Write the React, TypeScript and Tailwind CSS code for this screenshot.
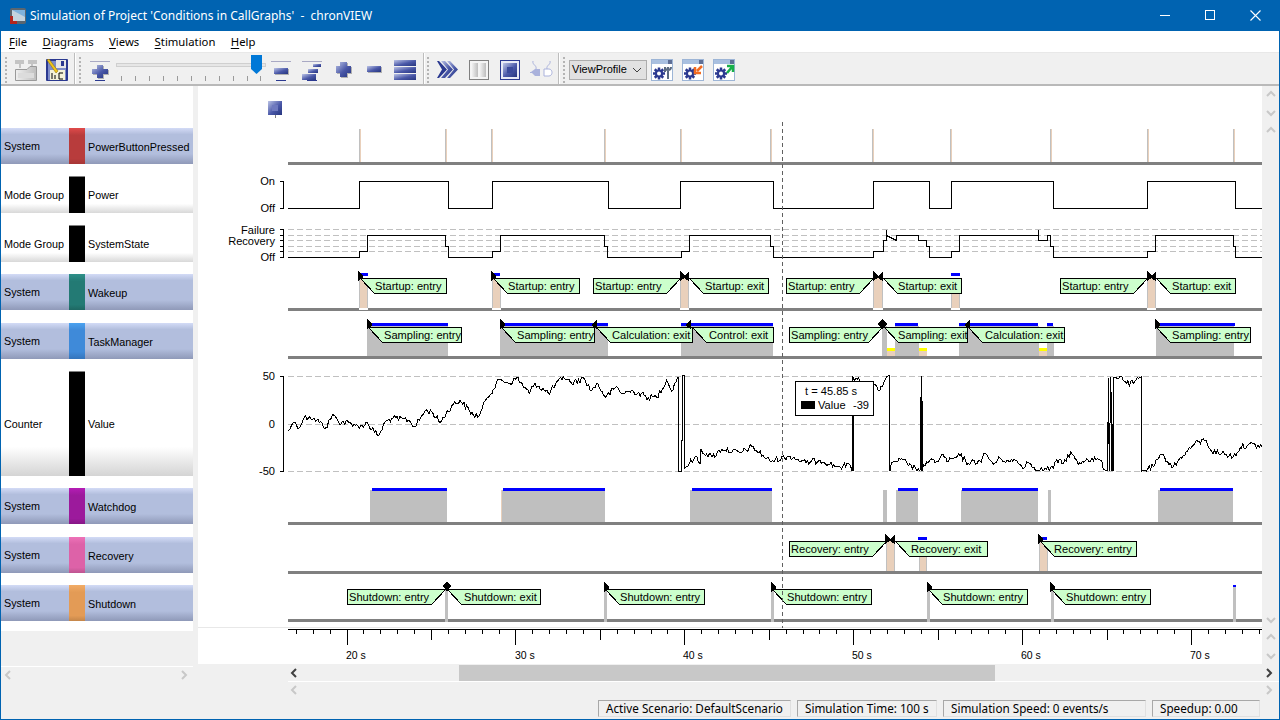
import React from "react";

const NAVY = "url(#navy)";
const FS = 11.1;

function Grip() {
  return (
    <svg width="3" height="26" className="shrink-0">
      {[0, 4, 8, 12, 16, 20, 24].map((y) => (
        <rect key={y} x="0" y={y} width="2" height="2" fill="#b4b4b4" />
      ))}
    </svg>
  );
}
function Sep({ cls }: { cls: string }) {
  return <div className={"w-[2px] h-[31px] -mt-[2px] bg-[#bdbdbd] border-r border-white shrink-0 " + cls} />;
}
function Chevron({ dir, color }: { dir: "l" | "r" | "u" | "d"; color: string }) {
  const p = { l: "6,1 2,5 6,9", r: "2,1 6,5 2,9", u: "1,6 5,2 9,6", d: "1,3 5,7 9,3" }[dir];
  return (
    <svg width="10" height="10" className="shrink-0">
      <polyline points={p} fill="none" stroke={color} strokeWidth="2" />
    </svg>
  );
}
function Gear({ x, y }: { x: number; y: number }) {
  const teeth = [0, 45, 90, 135];
  return (
    <g>
      {teeth.map((a) => (
        <rect key={a} x={x - 1.25} y={y - 6} width="2.5" height="12" fill="#2b3990" transform={`rotate(${a} ${x} ${y})`} />
      ))}
      <circle cx={x} cy={y} r="4" fill="#2b3990" />
      <circle cx={x} cy={y} r="2" fill="#fff" />
    </g>
  );
}
function WinIcon({ children, cls }: { children: React.ReactNode; cls: string }) {
  return (
    <svg width="22" height="22" className={"shrink-0 " + cls}>
      <rect x="0.5" y="0.5" width="21" height="21" fill="#fff" stroke="#9db5d6" />
      <rect x="1" y="1" width="20" height="4" fill="#a9c0e0" />
      <rect x="17" y="1" width="4" height="4" fill="#5f6f96" />
      <Gear x={8} y={14.500} />
      {children}
    </svg>
  );
}

// ---------- waveform -------------
const k8: number[][] = [[25,198],[35,180],[45,172],[58,188],[72,158],[90,155],[110,165],[138,188],[158,148],[175,170],[230,178],[238,190],[258,172],[296,213],[315,172],[335,160],[385,165],[405,185],[435,138],[455,140],[480,172],[515,122],[540,106],[580,150],[598,152],[620,100],[660,42],[690,55],[710,38],[748,85],[765,55],[805,85],[850,35],[875,55],[912,40],[935,78],[950,55],[978,97],[1010,65],[1025,85],[1060,78],[1105,97],[1130,97],[1160,45],[1175,78],[1192,38],[1195,38],[1195,318],[1205,318],[1208,32],[1213,32],[1214,310],[1220,305],[1245,275],[1260,295]];
const k9: number[][] = [[0,305],[30,300],[36,318],[37,32],[38,318],[39,35],[60,50],[100,60],[115,78],[135,45],[147,32],[149,32],[150,318],[150,312],[160,290],[190,285],[205,302],[235,312],[240,318],[244,32],[246,315],[260,290],[290,290],[305,268],[325,290],[360,272],[385,295],[420,288],[437,266],[460,298],[480,280],[510,290],[530,285],[548,310],[560,290],[595,315],[640,310],[650,285],[670,295],[692,262],[715,298],[740,282],[780,285],[795,315],[803,318],[805,38],[808,318],[812,36],[818,318],[822,36],[845,35],[860,55],[880,55],[904,35],[905,318],[915,315],[940,305],[965,270],[1000,305],[1030,270],[1065,235],[1098,225],[1115,260],[1145,265],[1180,275],[1200,248],[1225,238],[1266,245]];
const pts: number[][] = [
  ...k8.map(([a, b]) => [280 + a / 3, 365 + b / 3]),
  [700, 450],[712, 457],[722, 449],[740, 453],[752, 447],[770, 461],[790, 456],[806, 463],[820, 460],[838, 467],
  ...k9.map(([a, b]) => [840 + a / 3, 365 + b / 3]),
];
let seed = 12345;
const rnd = () => {
  seed = (seed * 1103515245 + 12345) & 0x7fffffff;
  return seed / 0x7fffffff - 0.5;
};
function wavePath() {
  let d = `M${pts[0][0].toFixed(1)} ${pts[0][1].toFixed(1)}`;
  for (let i = 1; i < pts.length; i++) {
    const [x0, y0] = pts[i - 1];
    const [x1, y1] = pts[i];
    const dx = x1 - x0;
    if (dx >= 3 && Math.abs(y1 - y0) < 70) {
      const n = Math.floor(dx / 1.3);
      for (let j = 1; j < n; j++) {
        const x = x0 + (dx * j) / n;
        const y = Math.max(376, Math.min(471, y0 + ((y1 - y0) * j) / n + rnd() * 6));
        d += `L${x.toFixed(1)} ${y.toFixed(1)}`;
      }
    }
    d += `L${x1.toFixed(1)} ${y1.toFixed(1)}`;
  }
  return d;
}
const WAVE = wavePath();

// ---------- chart helpers -------------
function Base({ y }: { y: number }) {
  return <rect x="288" y={y} width="974" height="3" fill="#808080" />;
}
function Dash({ y, d = "6 3" }: { y: number; d?: string }) {
  return <line x1="288" x2="1262" y1={y + 0.5} y2={y + 0.5} stroke="#c0c0c0" strokeDasharray={d} />;
}
function RC({ tip, right, y, t, tx }: { tip: number; right: number; y: number; t: string; tx: number }) {
  return (
    <g>
      <polygon points={`${tip + 0.5},${y + 0.5} ${right + 0.5},${y + 0.5} ${right + 0.5},${y + 15.5} ${tip + 14.5},${y + 15.5}`} fill="#ccffcc" stroke="#000" />
      <text x={tx} y={y + 12} fontSize={FS} fill="#000">{t}</text>
    </g>
  );
}
function LC({ left, tip, y, t }: { left: number; tip: number; y: number; t: string }) {
  return (
    <g>
      <polygon points={`${left + 0.5},${y + 0.5} ${tip + 0.5},${y + 0.5} ${tip - 13.5},${y + 15.5} ${left + 0.5},${y + 15.5}`} fill="#ccffcc" stroke="#000" />
      <text x={left + 2} y={y + 12} fontSize={FS} fill="#000">{t}</text>
    </g>
  );
}
function FR({ x, y }: { x: number; y: number }) {
  return <polygon points={`${x},${y - 7} ${x + 5},${y - 2} ${x + 5},${y} ${x},${y + 3}`} fill="#000" />;
}
function FL({ x, y }: { x: number; y: number }) {
  return <polygon points={`${x},${y - 7} ${x - 5},${y - 2} ${x - 5},${y} ${x},${y + 3}`} fill="#000" />;
}
function Tan({ x, w, y0, y1 }: { x: number; w: number; y0: number; y1: number }) {
  return (
    <g>
      <rect x={x} y={y0} width={w} height={y1 - y0} fill="#e9d0bb" />
      <rect x={x} y={y0} width="1" height={y1 - y0} fill="#c0c0c0" />
      <rect x={x + w - 1} y={y0} width="1" height={y1 - y0} fill="#c0c0c0" />
    </g>
  );
}
function Blue({ x, x2, y }: { x: number; x2: number; y: number }) {
  return <rect x={x} y={y} width={x2 - x} height="3" fill="#0000ff" />;
}
function Gray({ x, x2, y0, y1 }: { x: number; x2: number; y0: number; y1: number }) {
  return <rect x={x} y={y0} width={x2 - x} height={y1 - y0} fill="#bfbfbf" />;
}

const Chart = () => {
  const ticks: React.ReactNode[] = [];
  for (let i = 0; i < 59; i++) {
    const v = 16 + i;
    const x = Math.round(346.5 + (v - 20) * 16.89);
    if (x < 288 || x > 1262) continue;
    const len = v % 10 === 0 ? 15 : v % 5 === 0 ? 10 : 4;
    ticks.push(<line key={v} x1={x + 0.5} x2={x + 0.5} y1="630" y2={630 + len} stroke="#000" />);
  }
  return (
    <svg width="1064" height="578" viewBox="198 86 1064 578" className="block shrink-0 bg-white" shapeRendering="crispEdges" fontFamily="'Liberation Sans',sans-serif">
      {/* mark */}
      <rect x="268" y="101" width="14" height="14" fill={NAVY} />
      <rect x="272" y="105" width="6" height="6" fill="#6f7abf" />
      <rect x="275" y="115" width="1" height="3" fill="#808080" />

      {/* PowerButtonPressed */}
      {[359, 445, 491, 604, 680, 770, 872, 950, 1050, 1147, 1233].map((x) => (
        <g key={x}>
          <rect x={x} y="129" width="1" height="33" fill="#c0c0c0" />
          <rect x={x + 1} y="129" width="1" height="33" fill="#e9d0bb" />
        </g>
      ))}
      <Base y={162} />

      {/* Power */}
      <polyline fill="none" stroke="#000" points="288,208.5 359.5,208.5 359.5,181.5 448.5,181.5 448.5,208.5 492.5,208.5 492.5,181.5 608.5,181.5 608.5,208.5 680.5,208.5 680.5,181.5 773.5,181.5 773.5,208.5 873.5,208.5 873.5,181.5 929.5,181.5 929.5,208.5 951.5,208.5 951.5,181.5 1053.5,181.5 1053.5,208.5 1147.5,208.5 1147.5,181.5 1235.5,181.5 1235.5,208.5 1262,208.5" />
      <polyline fill="none" stroke="#000" points="280,181.5 283.5,181.5 283.5,208.5 280,208.5" />
      <text x="275" y="185" textAnchor="end" fontSize={FS} fill="#000">On</text>
      <text x="275" y="212" textAnchor="end" fontSize={FS} fill="#000">Off</text>

      {/* SystemState */}
      {[229, 235, 240, 246, 251].map((y) => <Dash key={y} y={y} />)}
      <polyline fill="none" stroke="#000" points="288,257.5 359.5,257.5 359.5,251.5 367.5,251.5 367.5,235.5 445.5,235.5 445.5,246.5 448.5,246.5 448.5,257.5 492.5,257.5 492.5,251.5 500.5,251.5 500.5,235.5 604.5,235.5 604.5,246.5 607.5,246.5 607.5,257.5 681.5,257.5 681.5,251.5 689.5,251.5 689.5,235.5 770.5,235.5 770.5,246.5 773.5,246.5 773.5,257.5 873.5,257.5 873.5,251.5 883.5,251.5 883.5,240.5 886.5,240.5 886.5,229.5 886.5,235.5 896.5,240.5 896.5,235.5 918.5,235.5 918.5,240.5 926.5,240.5 926.5,246.5 929.5,246.5 929.5,257.5 951.5,257.5 951.5,251.5 959.5,251.5 959.5,235.5 1038.5,235.5 1038.5,229.5 1038.5,240.5 1047.5,240.5 1047.5,235.5 1050.5,235.5 1050.5,246.5 1053.5,246.5 1053.5,257.5 1147.5,257.5 1147.5,251.5 1155.5,251.5 1155.5,235.5 1233.5,235.5 1233.5,246.5 1235.5,246.5 1235.5,257.5 1262,257.5" />
      <polyline fill="none" stroke="#000" points="280,229.5 283.5,229.5 283.5,257.5 280,257.5" />
      {[235, 240, 246, 251].map((y) => <line key={y} x1="280" x2="283" y1={y + 0.5} y2={y + 0.5} stroke="#000" />)}
      <text x="275" y="234" textAnchor="end" fontSize={FS} fill="#000">Failure</text>
      <text x="275" y="245" textAnchor="end" fontSize={FS} fill="#000">Recovery</text>
      <text x="275" y="261" textAnchor="end" fontSize={FS} fill="#000">Off</text>

      {/* Wakeup */}
      <Base y={308} />
      {[[359, 9], [492, 9], [680, 9], [873, 10], [951, 9], [1147, 9]].map(([x, w]) => (
        <g key={x}>
          <rect x={x} y="308" width={w} height="2" fill="#fff" />
          <Tan x={x} w={w} y0={278} y1={308} />
        </g>
      ))}
      <Blue x={360} x2={368} y={273} />
      <Blue x={493} x2={500} y={273} />
      <Blue x={951} x2={960} y={273} />
      <RC tip={360} right={446} y={278} t="Startup: entry" tx={375} />
      <RC tip={493} right={579} y={278} t="Startup: entry" tx={508} />
      <LC left={593} tip={680} y={278} t="Startup: entry" />
      <RC tip={689} right={768} y={278} t="Startup: exit" tx={705} />
      <LC left={786} tip={873} y={278} t="Startup: entry" />
      <RC tip={883} right={961} y={278} t="Startup: exit" tx={898} />
      <LC left={1060} tip={1147} y={278} t="Startup: entry" />
      <RC tip={1156} right={1235} y={278} t="Startup: exit" tx={1172} />
      <FR x={358} y={278} /><FR x={491} y={278} />
      <FL x={689} y={278} /><FR x={680} y={278} />
      <FL x={883} y={278} /><FR x={873} y={278} />
      <FL x={1156} y={278} /><FR x={1147} y={278} />

      {/* TaskManager */}
      <Base y={356} />
      <Gray x={367} x2={448} y0={326} y1={356} />
      <Gray x={500} x2={608} y0={326} y1={356} />
      <Gray x={681} x2={773} y0={326} y1={356} />
      <Gray x={882} x2={887} y0={326} y1={356} />
      <Gray x={895} x2={919} y0={326} y1={356} />
      <Gray x={959} x2={1039} y0={326} y1={356} />
      <Gray x={1047} x2={1054} y0={326} y1={356} />
      <Gray x={1156} x2={1234} y0={326} y1={356} />
      {[887, 919, 1039].map((x) => (
        <g key={x}>
          <rect x={x} y="348" width="8" height="3" fill="#ffff00" />
          <rect x={x} y="351" width="8" height="5" fill="#e9d0bb" />
        </g>
      ))}
      <Blue x={368} x2={448} y={323} />
      <Blue x={501} x2={608} y={323} />
      <Blue x={681} x2={773} y={323} />
      <Blue x={895} x2={918} y={323} />
      <Blue x={959} x2={1038} y={323} />
      <Blue x={1047} x2={1053} y={323} />
      <Blue x={1156} x2={1235} y={323} />
      <RC tip={368} right={461} y={327} t="Sampling: entry" tx={384} />
      <RC tip={501} right={594} y={327} t="Sampling: entry" tx={517} />
      <RC tip={596} right={692} y={327} t="Calculation: exit" tx={612} />
      <RC tip={692} right={773} y={327} t="Control: exit" tx={709} />
      <LC left={789} tip={882} y={327} t="Sampling: entry" />
      <RC tip={884} right={967} y={327} t="Sampling: exit" tx={898} />
      <RC tip={968} right={1064} y={327} t="Calculation: exit" tx={985} />
      <RC tip={1156} right={1250} y={327} t="Sampling: entry" tx={1172} />
      <FR x={367} y={326} /><FR x={500} y={326} /><FL x={597} y={326} />
      <FL x={691} y={326} /><FR x={1155} y={326} /><FL x={970} y={326} />
      <polygon points="882,319 887,324 882,329 877,324" fill="#000" />

      {/* Value */}
      <Dash y={376} /><Dash y={424} /><Dash y={471} />
      <polyline fill="none" stroke="#000" points="280,376.5 283.5,376.5 283.5,471.5 280,471.5" />
      <text x="275" y="380" textAnchor="end" fontSize={FS} fill="#000">50</text>
      <text x="275" y="428" textAnchor="end" fontSize={FS} fill="#000">0</text>
      <text x="275" y="475" textAnchor="end" fontSize={FS} fill="#000">-50</text>
      <path d={WAVE} fill="none" stroke="#000" />
      <rect x="852" y="415" width="2" height="56" fill="#000" />
      <rect x="921" y="401" width="2" height="70" fill="#000" />
      <rect x="1111" y="424" width="3" height="47" fill="#000" />

      {/* Watchdog */}
      <Base y={522} />
      <Gray x={370} x2={447} y0={490} y1={522} />
      <rect x="501" y="490" width="1" height="32" fill="#e9d0bb" />
      <Gray x={502} x2={605} y0={490} y1={522} />
      <Gray x={690} x2={772} y0={490} y1={522} />
      <Gray x={883} x2={887} y0={490} y1={522} />
      <Gray x={896} x2={918} y0={490} y1={522} />
      <Gray x={961} x2={1038} y0={490} y1={522} />
      <Gray x={1048} x2={1051} y0={490} y1={522} />
      <Gray x={1158} x2={1233} y0={490} y1={522} />
      <Blue x={372} x2={447} y={488} />
      <Blue x={503} x2={605} y={488} />
      <Blue x={692} x2={772} y={488} />
      <Blue x={898} x2={918} y={488} />
      <Blue x={962} x2={1038} y={488} />
      <Blue x={1160} x2={1233} y={488} />

      {/* Recovery */}
      <Base y={571} />
      <Tan x={886} w={9} y0={541} y1={571} />
      <Tan x={919} w={8} y0={541} y1={571} />
      <Tan x={1039} w={9} y0={541} y1={571} />
      <Blue x={918} x2={927} y={537} />
      <Blue x={1040} x2={1047} y={537} />
      <LC left={789} tip={886} y={541} t="Recovery: entry" />
      <RC tip={895} right={987} y={541} t="Recovery: exit" tx={911} />
      <RC tip={1040} right={1136} y={541} t="Recovery: entry" tx={1054} />
      <FR x={885} y={541} /><FL x={895} y={541} /><FR x={1038} y={541} />

      {/* Shutdown */}
      <Base y={619} />
      {[445, 604, 771, 927, 1051, 1233].map((x) => (
        <rect key={x} x={x} y="586" width="3" height="36" fill="#c0c0c0" />
      ))}
      <LC left={347} tip={445} y={589} t="Shutdown: entry" />
      <RC tip={447} right={540} y={589} t="Shutdown: exit" tx={464} />
      <RC tip={605} right={704} y={589} t="Shutdown: entry" tx={620} />
      <RC tip={772} right={871} y={589} t="Shutdown: entry" tx={787} />
      <RC tip={928} right={1027} y={589} t="Shutdown: entry" tx={943} />
      <RC tip={1051} right={1150} y={589} t="Shutdown: entry" tx={1066} />
      <polygon points="447,581 451,586 447,592 443,586" fill="#000" />
      <FR x={604} y={589} /><FR x={771} y={589} /><FR x={927} y={589} /><FR x={1050} y={589} />
      <rect x="1233" y="585" width="3" height="2" fill="#0000ff" />

      {/* axis */}
      <rect x="198" y="627" width="1064" height="1" fill="#e8e8e8" />
      <line x1="288" x2="1262" y1="629.5" y2="629.5" stroke="#000" />
      {ticks}
      {[[20, 346], [30, 515], [40, 683], [50, 852], [60, 1021], [70, 1190]].map(([v, x]) => (
        <text key={v} x={x} y="659" fontSize="10.500" fill="#000">{v} s</text>
      ))}

      {/* cursor */}
      <line x1="782.5" x2="782.5" y1="122" y2="628" stroke="#606060" strokeDasharray="4 3" />

      {/* tooltip */}
      <rect x="795.5" y="381.5" width="78" height="34" fill="#fff" stroke="#000" />
      <text x="805" y="395" fontSize={FS} fill="#000">t = 45.85 s</text>
      <rect x="801" y="401" width="14" height="8" fill="#000" />
      <text x="818" y="409" fontSize={FS} fill="#000">Value</text>
      <text x="853" y="409" fontSize={FS} fill="#000">-39</text>
    </svg>
  );
};

// ---------- left list -------------
const SYS = "bg-[linear-gradient(#d3dbf6_0%,#b2bedd_18%,#b2bedd_72%,#8f99b8_100%)]";
const MODE = "bg-[linear-gradient(#ffffff_0%,#ffffff_75%,#d8d8d8_100%)]";
const rows = [
  { a: "System", b: "PowerButtonPressed", bg: SYS, c: "bg-[linear-gradient(#e04a4a_0%,#b83c3c_20%,#b83c3c_85%,#a63636_100%)]", h: "h-[36px]", m: "" },
  { a: "Mode Group", b: "Power", bg: MODE, c: "bg-black border-t border-[#808080]", h: "h-[37px]", m: "mt-[12px]" },
  { a: "Mode Group", b: "SystemState", bg: MODE, c: "bg-black border-t border-[#808080]", h: "h-[37px]", m: "mt-[12px]" },
  { a: "System", b: "Wakeup", bg: SYS, c: "bg-[linear-gradient(#2e918a_0%,#237a74_20%,#237a74_85%,#1e6762_100%)]", h: "h-[36px]", m: "mt-[12px]" },
  { a: "System", b: "TaskManager", bg: SYS, c: "bg-[linear-gradient(#4ba3f0_0%,#3f8ad9_20%,#3f8ad9_80%,#3474bb_100%)]", h: "h-[36px]", m: "mt-[13px]" },
  { a: "Counter", b: "Value", bg: "bg-[linear-gradient(#ffffff_0%,#ffffff_72%,#d4d4d4_100%)]", c: "bg-black border-t border-[#808080]", h: "h-[105px]", m: "mt-[12px]" },
  { a: "System", b: "Watchdog", bg: SYS, c: "bg-[linear-gradient(#b51cb5_0%,#9c1a9c_20%,#9c1a9c_85%,#851685_100%)]", h: "h-[36px]", m: "mt-[12px]" },
  { a: "System", b: "Recovery", bg: SYS, c: "bg-[linear-gradient(#ee72b8_0%,#dd62a8_20%,#dd62a8_85%,#bd5590_100%)]", h: "h-[36px]", m: "mt-[13px]" },
  { a: "System", b: "Shutdown", bg: SYS, c: "bg-[linear-gradient(#f2ac66_0%,#e39b56_20%,#e39b56_85%,#c4864a_100%)]", h: "h-[36px]", m: "mt-[12px]" },
];

function Menu({ u, r }: { u: string; r: string }) {
  return (
    <span className="shrink-0">
      <span className="underline underline-offset-2">{u}</span>
      {r}
    </span>
  );
}

const STATUS = "h-[17px] border border-[#a8a8a8] border-r-[#e0e0e0] border-b-[#e0e0e0] pl-[7px] pt-[1px] flex items-center whitespace-nowrap";

export default function App() {
  return (
    <div className="w-[1280px] h-[720px] flex flex-col bg-[#f0f0f0] overflow-hidden border-x border-b border-[#0063b1] text-[10.8px] text-black font-['Liberation_Sans',sans-serif] leading-none">
      <svg className="absolute w-0 h-0">
        <defs>
          <linearGradient id="navy" x1="0" y1="0" x2="1" y2="1">
            <stop offset="0" stopColor="#bcc4e6" />
            <stop offset="0.55" stopColor="#4a58a8" />
            <stop offset="1" stopColor="#26357f" />
          </linearGradient>
          <linearGradient id="grey" x1="0" y1="0" x2="1" y2="0">
            <stop offset="0" stopColor="#f0f0f0" />
            <stop offset="1" stopColor="#bdbdbd" />
          </linearGradient>
        </defs>
      </svg>

      {/* title bar */}
      <div className="h-[31px] bg-[#0063b1] text-white flex items-center shrink-0 text-[12px] font-['Noto_Sans',sans-serif]">
        <svg width="16" height="16" className="ml-[9px] shrink-0">
          <rect x="0" y="0" width="16" height="16" rx="2" fill="#5a6670" />
          <rect x="2" y="2" width="13" height="11" fill="#7fb2dc" />
          <polygon points="2,2 15,9 15,13 2,13" fill="#c4d3de" />
          <rect x="0" y="8" width="3" height="8" fill="#b3261e" />
          <rect x="0" y="13" width="7" height="3" fill="#b3261e" />
        </svg>
        <span className="ml-[4px] whitespace-pre">Simulation of Project 'Conditions in CallGraphs'  -  chronVIEW</span>
        <div className="ml-auto flex items-center">
          <svg width="11" height="11" className="mr-[34px]"><rect x="0" y="5" width="10" height="1" fill="#fff" /></svg>
          <svg width="11" height="11" className="mr-[34px]"><rect x="0.5" y="0.5" width="9" height="9" fill="none" stroke="#fff" /></svg>
          <svg width="11" height="11" className="mr-[18px]"><path d="M0.5 0.5L10.5 10.5M10.5 0.5L0.5 10.5" stroke="#fff" strokeWidth="1.1" /></svg>
        </div>
      </div>

      {/* menu */}
      <div className="h-[21px] bg-white flex items-center gap-[15.4px] pl-[8px] pt-[1px] shrink-0 text-[11.3px] font-['Noto_Sans',sans-serif]">
        <Menu u="F" r="ile" />
        <Menu u="D" r="iagrams" />
        <Menu u="V" r="iews" />
        <Menu u="S" r="timulation" />
        <Menu u="H" r="elp" />
      </div>

      {/* toolbar */}
      <div className="h-[34px] flex items-center pt-[2px] bg-[#f0f0f0] border-t border-b-2 border-t-[#e8e8e8] border-b-[#b9b9b9] shrink-0">
        <div className="ml-[4px]"><Grip /></div>
        <svg width="22" height="22" className="ml-[7px] shrink-0">
          <rect x="0" y="1" width="9" height="4" fill="#c4c4c4" />
          <rect x="13" y="1" width="9" height="4" fill="#c4c4c4" />
          <path d="M5 5V9M17 5V7" stroke="#9a9a9a" fill="none" />
          <path d="M0.5 10.5H12L15 7.5H21.5V21.5H0.5Z" fill="url(#grey)" stroke="#9a9a9a" />
          <rect x="3" y="14" width="16" height="5" fill="#dcdcdc" />
        </svg>
        <svg width="22" height="22" className="ml-[9px] shrink-0">
          <rect x="0" y="0" width="22" height="22" rx="1" fill="#2b3990" />
          <rect x="2" y="2" width="18" height="19" fill="#7f8dc8" />
          <rect x="10" y="1" width="10" height="8" fill="#e6e6e6" />
          <rect x="15" y="2" width="3" height="5" fill="#2b3990" />
          <rect x="4" y="11" width="15" height="10" fill="#f5f2d8" />
          <path d="M1 1L3 0L12 12L10 14Z" fill="#f0c419" stroke="#8a6d00" strokeWidth="0.5" />
          <path d="M6 20V14M9 20V16M13 20V14H17M13 20H17" stroke="#000" fill="none" strokeWidth="1" />
        </svg>
        <Sep cls="ml-[6px]" />
        <div className="ml-[3px]"><Grip /></div>
        <svg width="20" height="22" className="ml-[8px] shrink-0">
          <rect x="0" y="2" width="20" height="1" fill="#a9a9c4" />
          <path d="M7 6H13V10H18V15H13V19H7V15H2V10H7Z" transform="translate(1 1)" fill="#b0b0b0" />
          <path d="M7 6H13V10H18V15H13V19H7V15H2V10H7Z" fill={NAVY} />
          <rect x="5" y="21" width="10" height="1" fill="#2b3990" />
        </svg>
        <svg width="150" height="30" className="ml-[6px] shrink-0">
          <rect x="0.5" y="8.5" width="149" height="3" fill="#e6e6e6" stroke="#cfcfcf" />
          {[5, 19, 33, 47, 61, 75, 89, 103, 117, 131, 144].map((x) => (
            <rect key={x} x={x} y="21" width="1" height="5" fill="#9a9a9a" />
          ))}
          <path d="M135 0H146V14L140.500 19L135 14Z" fill="#0078d7" />
        </svg>
        <svg width="20" height="22" className="ml-[5px] shrink-0">
          <rect x="0" y="2" width="20" height="1" fill="#a9a9c4" />
          <rect x="4" y="10" width="14" height="6" fill="#b0b0b0" />
          <rect x="3" y="9" width="14" height="6" fill={NAVY} />
          <rect x="5" y="21" width="10" height="1" fill="#2b3990" />
        </svg>
        <svg width="20" height="22" className="ml-[11px] shrink-0">
          <rect x="0" y="2" width="20" height="1" fill="#a9a9c4" />
          <rect x="11" y="5" width="8" height="3" fill={NAVY} />
          <rect x="6" y="10" width="10" height="4" fill={NAVY} />
          <rect x="0" y="15" width="14" height="6" fill={NAVY} />
          <rect x="5" y="21" width="10" height="1" fill="#2b3990" />
        </svg>
        <svg width="16" height="16" className="ml-[14px] shrink-0">
          <path d="M4 0H11V4H15V11H11V15H4V11H0V4H4Z" transform="translate(1 1)" fill="#b0b0b0" />
          <path d="M4 0H11V4H15V11H11V15H4V11H0V4H4Z" fill={NAVY} />
        </svg>
        <svg width="15" height="7" className="ml-[15px] shrink-0">
          <rect x="1" y="1" width="14" height="6" fill="#b0b0b0" />
          <rect x="0" y="0" width="14" height="6" fill={NAVY} />
        </svg>
        <svg width="22" height="20" className="ml-[12px] shrink-0">
          <rect x="0" y="0" width="22" height="6" fill={NAVY} />
          <rect x="0" y="7" width="22" height="6" fill={NAVY} />
          <rect x="0" y="14" width="22" height="6" fill={NAVY} />
        </svg>
        <Sep cls="ml-[7px]" />
        <div className="ml-[2px]"><Grip /></div>
        <svg width="22" height="18" className="ml-[7px] shrink-0">
          <path d="M0 0H2L10 8.500L2 17H0L5 8.500Z" fill="#2b3990" />
          <path d="M4 0H8L16 8.500L8 17H4L11 8.500Z" fill={NAVY} />
          <path d="M10 0H13L21 8.500L13 17H10L17 8.500Z" fill={NAVY} />
        </svg>
        <svg width="20" height="20" className="ml-[10px] shrink-0">
          <rect x="0.5" y="0.5" width="19" height="19" fill="#f4f4f4" stroke="#808080" />
          <rect x="3" y="3" width="6" height="14" fill="url(#grey)" />
          <rect x="11" y="3" width="6" height="14" fill="url(#grey)" />
        </svg>
        <svg width="20" height="20" className="ml-[11px] shrink-0">
          <rect x="0.5" y="0.5" width="19" height="19" fill="#e8eaf6" stroke="#2b3990" />
          <rect x="3" y="3" width="14" height="14" fill={NAVY} />
          <rect x="7" y="7" width="6" height="6" fill="#3b4a9c" />
        </svg>
        <svg width="23" height="20" className="ml-[10px] shrink-0" fill="none">
          <path d="M3 1C2 5 7 5 6 9M20 1C21 5 16 5 17 9" stroke="#aab2dc" />
          <path d="M1 12L5 9H10V16H5Z" fill="#aab2dc" />
          <path d="M14 9H19C21 9 22 11 22 12.500C22 14 21 16 19 16H14Z" fill="#fff" stroke="#aab2dc" />
          <rect x="0" y="12" width="2" height="1" fill="#aab2dc" />
        </svg>
        <Sep cls="ml-[5px]" />
        <div className="ml-[3px]"><Grip /></div>
        <div className="ml-[3px] w-[78px] h-[20px] bg-[#e1e1e1] border border-[#adadad] flex items-center pl-[2px] shrink-0 text-[11px]">
          <span>ViewProfile</span>
          <svg width="10" height="6" className="ml-auto mr-[4px]"><polyline points="1,1 5,5 9,1" fill="none" stroke="#404040" /></svg>
        </div>
        <WinIcon cls="ml-[4px]">
          <path d="M14 8V13M17 8V20M14 8C14 12 20 12 20 8" stroke="#5a6a80" strokeWidth="2" fill="none" />
        </WinIcon>
        <WinIcon cls="ml-[9px]">
          <path d="M20 7L15 12M13 8V14H19" stroke="#f26b21" strokeWidth="2.500" fill="none" />
        </WinIcon>
        <WinIcon cls="ml-[9px]">
          <path d="M14 14L19 8M14 7H20V13" stroke="#19b04a" strokeWidth="2.500" fill="none" />
        </WinIcon>
      </div>

      {/* body */}
      <div className="flex flex-1 min-h-0">
        <div className="w-[192px] shrink-0 flex flex-col">
          <div className="h-[545px] bg-white pt-[42px] shrink-0">
            {rows.map((r, i) => (
              <div key={i} className={"flex items-center " + r.h + " " + r.m + " " + r.bg}>
                <div className="w-[68px] pl-[3px] pt-[1px] shrink-0 whitespace-nowrap">{r.a}</div>
                <div className={"w-[16px] h-full shrink-0 " + r.c} />
                <div className="pl-[3px] pt-[2px] whitespace-nowrap">{r.b}</div>
              </div>
            ))}
          </div>
          <div className="h-[35px] shrink-0" />
          <div className="h-px bg-white shrink-0" />
          <div className="h-[16px] flex items-center justify-between px-[3px] shrink-0">
            <Chevron dir="l" color="#c8c8c8" />
            <Chevron dir="r" color="#c8c8c8" />
          </div>
        </div>
        <div className="w-[5px] shrink-0" />
        <div className="flex-1 min-w-0 flex flex-col">
          <div className="flex shrink-0">
            <Chart />
            <div className="flex-1 flex flex-col items-center pt-[4px] gap-[8px]">
              <Chevron dir="u" color="#c8c8c8" />
              <Chevron dir="d" color="#c8c8c8" />
              <Chevron dir="u" color="#c8c8c8" />
              <div className="mt-auto mb-[3px] flex flex-col gap-[8px] items-center">
                <Chevron dir="d" color="#c8c8c8" />
                <Chevron dir="u" color="#c8c8c8" />
                <Chevron dir="d" color="#c8c8c8" />
              </div>
            </div>
          </div>
          <div className="h-[16px] mt-[1px] ml-[90px] flex items-center bg-[#f0f0f0] shrink-0">
            <div className="w-[171px] pl-[2px] shrink-0"><Chevron dir="l" color="#404040" /></div>
            <div className="w-[536px] h-[16px] bg-[#c8c8c8] shrink-0" />
            <div className="ml-auto mr-[4px]"><Chevron dir="r" color="#404040" /></div>
          </div>
          <div className="h-px ml-[90px] bg-white shrink-0" />
          <div className="h-[16px] ml-[90px] flex items-center justify-between pl-[2px] pr-[4px] shrink-0">
            <Chevron dir="l" color="#c8c8c8" />
            <Chevron dir="r" color="#c8c8c8" />
          </div>
        </div>
      </div>

      {/* status bar */}
      <div className="h-[19px] flex items-start shrink-0 pl-[597px] text-[11.7px] font-['Noto_Sans',sans-serif]">
        <div className={"w-[193px] " + STATUS}>Active Scenario: DefaultScenario</div>
        <div className={"ml-[6px] w-[140px] " + STATUS}>Simulation Time: 100 s</div>
        <div className={"ml-[6px] w-[203px] " + STATUS}>Simulation Speed: 0 events/s</div>
        <div className={"ml-[6px] w-[108px] " + STATUS}>Speedup: 0.00</div>
      </div>
    </div>
  );
}
